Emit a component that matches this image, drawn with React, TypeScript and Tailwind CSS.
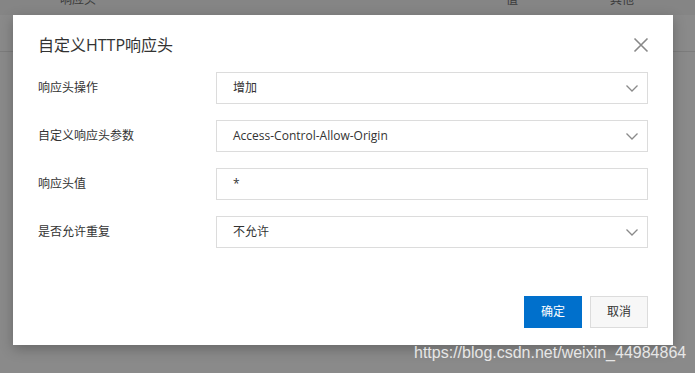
import React from "react";

const font = { fontFamily: '"Open Sans", "Noto Sans CJK SC", sans-serif' };

function Chevron() {
  return (
    <svg width="12" height="7" viewBox="0 0 12 7" className="shrink-0">
      <polyline points="0.5,0.5 6,6 11.5,0.5" fill="none" stroke="#8a8a8a" strokeWidth="1.3" />
    </svg>
  );
}

function Field({ label, value, select }: { label: string; value: string; select?: boolean }) {
  return (
    <div className="flex items-center h-8">
      <div className="w-[178px] shrink-0 text-[12px] text-[#333]">{label}</div>
      <div className="flex-1 h-8 border border-[#dcdcdc] bg-white flex items-center pl-[16px] pr-[9px]">
        <span className="flex-1 text-[12px] text-[#333]">{value}</span>
        {select && <Chevron />}
      </div>
    </div>
  );
}

export default function App() {
  return (
    <div className="relative w-[695px] h-[373px] overflow-hidden bg-[#8a8a8a]" style={font}>
      <div className="h-[15px] bg-[#858585] relative">
        <span className="absolute left-[60px] top-[-9px] text-[12px] text-[#3a3a3a]">响应头</span>
        <span className="absolute left-[506px] top-[-9px] text-[12px] text-[#3a3a3a]">值</span>
        <span className="absolute left-[610px] top-[-9px] text-[12px] text-[#3a3a3a]">其他</span>
      </div>
      <div className="h-[36px]" />
      <div className="h-px bg-[#7c7c7c]" />

      <div className="absolute left-[13px] top-[15px] w-[660px] h-[330px] bg-white shadow-[0_4px_12px_rgba(0,0,0,0.25)] flex flex-col px-[25px] pt-[20px] pb-[17px]">
        <div className="flex items-center h-5">
          <span className="flex-1 text-[16px] text-[#333] leading-5">自定义HTTP响应头</span>
          <svg width="16" height="16" viewBox="0 0 16 16" className="mr-[-1px]">
            <path d="M1.5 1.5 L14.5 14.5 M14.5 1.5 L1.5 14.5" stroke="#888" strokeWidth="1.6" fill="none" />
          </svg>
        </div>
        <div className="flex flex-col gap-4 mt-[17px]">
          <Field label="响应头操作" value="增加" select />
          <Field label="自定义响应头参数" value="Access-Control-Allow-Origin" select />
          <Field label="响应头值" value="*" />
          <Field label="是否允许重复" value="不允许" select />
        </div>
        <div className="flex-1" />
        <div className="flex justify-end gap-2">
          <button className="w-[58px] h-8 bg-[#0070cc] text-white text-[12px]">确定</button>
          <button className="w-[58px] h-8 bg-[#f7f7f7] border border-[#dcdcdc] text-[#333] text-[12px]">取消</button>
        </div>
      </div>

      <div
        className="absolute left-[414px] top-[344px] text-[16px] text-[#e6e6e6] leading-[18px] whitespace-nowrap"
        style={{ fontFamily: '"Liberation Sans", Arial, sans-serif' }}
      >
        https://blog.csdn.net/weixin_44984864
      </div>
    </div>
  );
}
